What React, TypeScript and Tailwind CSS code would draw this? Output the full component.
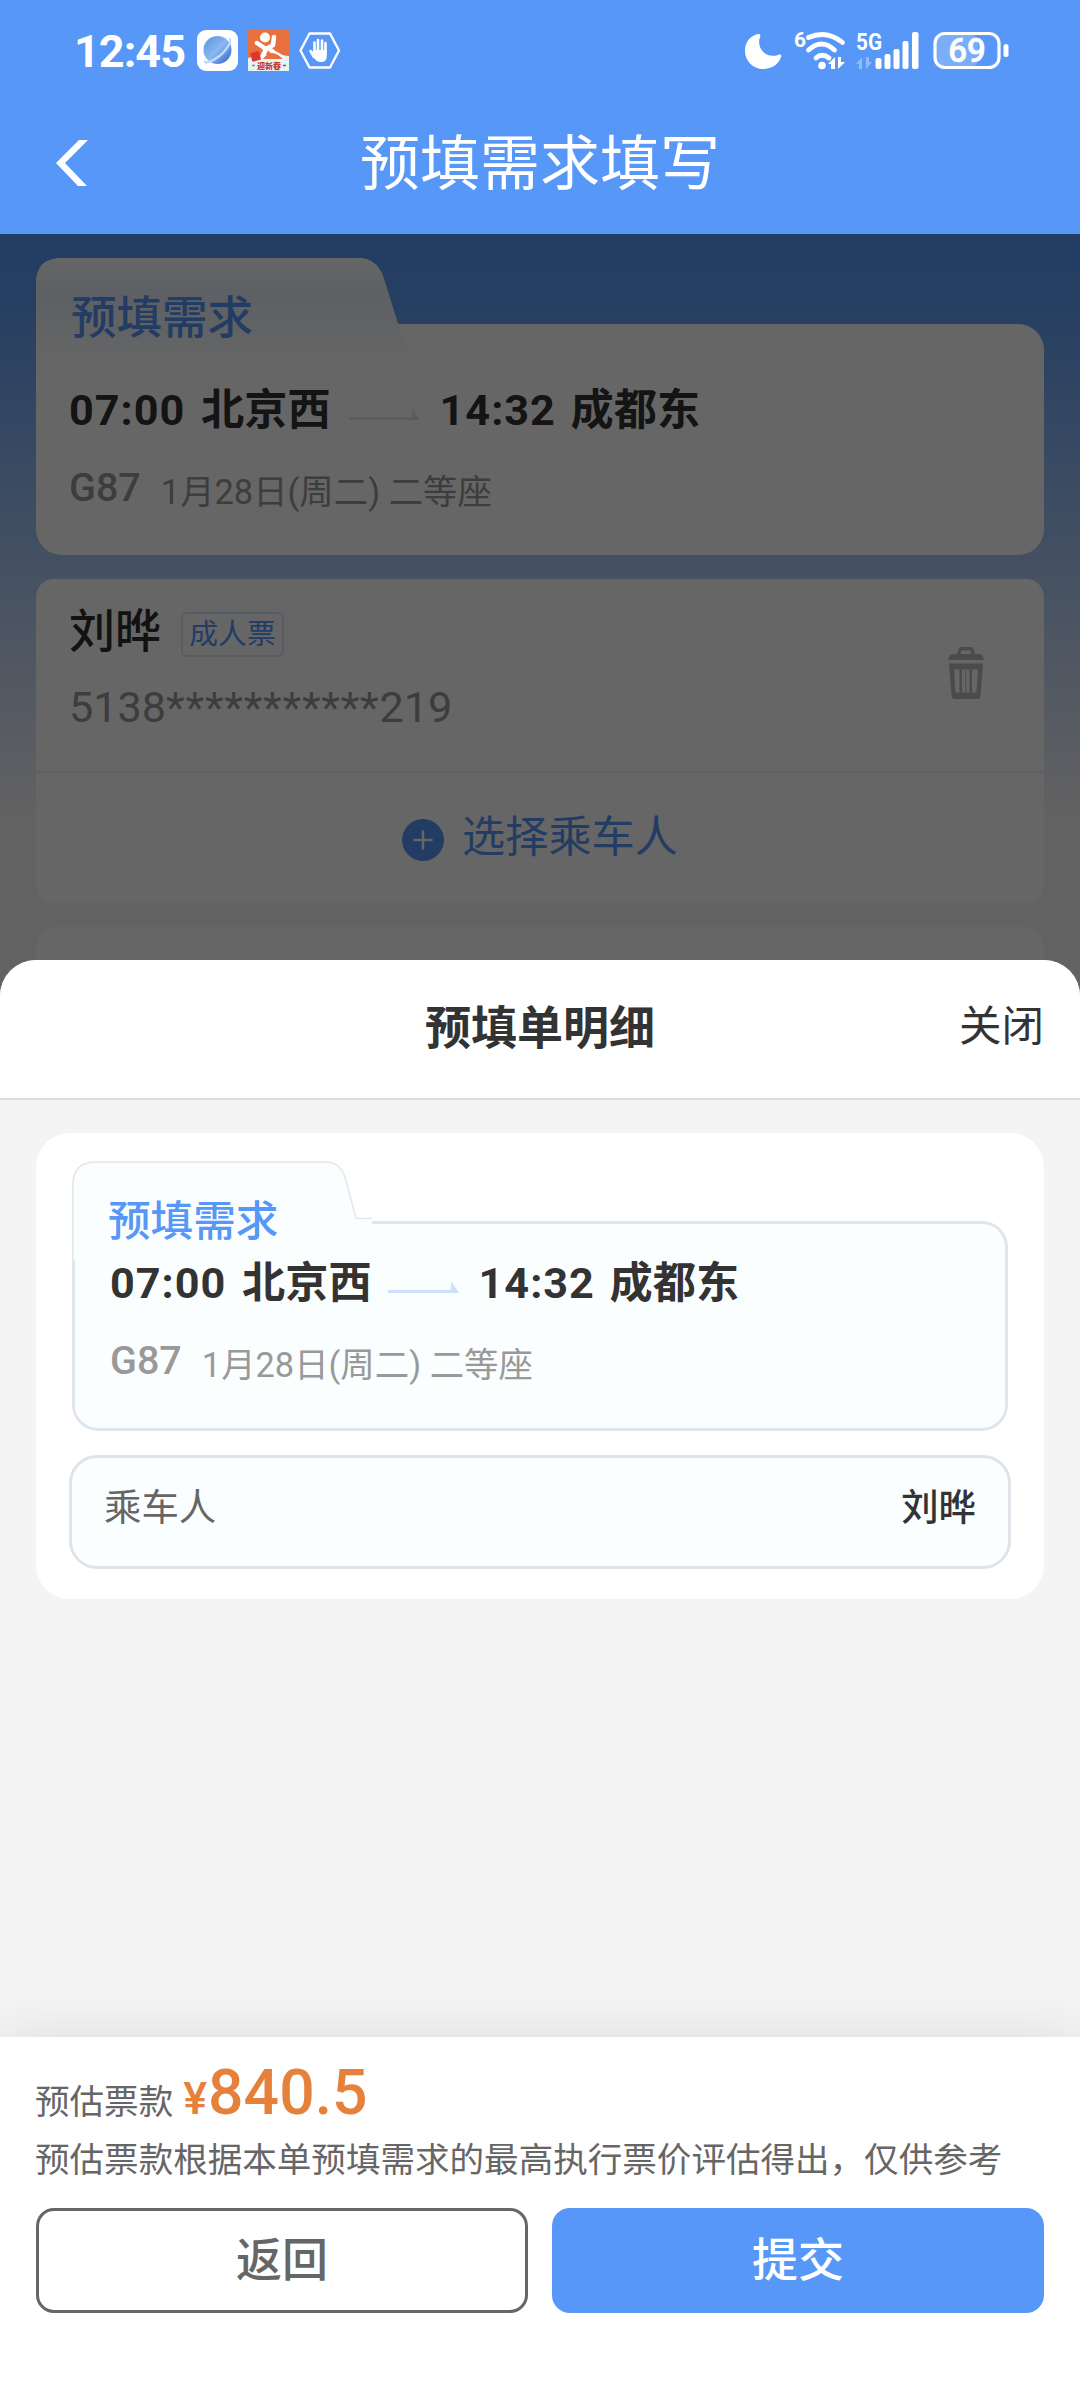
import { useState } from "react";

const FONT =
  "font-['Roboto','Noto_Sans_CJK_SC',sans-serif]";

interface TripInfoProps {
  arrowColor: string;
  arrowMargin: string;
}

function StatusIconsLeft() {
  return (
    <svg width="146" height="44" viewBox="0 0 146 44" fill="none">
      <defs>
        <linearGradient id="planet" x1="0" y1="0" x2="1" y2="1">
          <stop offset="0" stopColor="#5a93dc" />
          <stop offset="0.5" stopColor="#8ab8f2" />
          <stop offset="1" stopColor="#2c5cc4" />
        </linearGradient>
      </defs>
      {/* browser */}
      <rect x="0" y="1" width="41" height="41" rx="9" fill="#fff" />
      <circle cx="20.500" cy="21" r="14" fill="url(#planet)" />
      <path
        d="M31 9c4-1 4 3 2 7-4 8-13 16-21 18-5 2-6-1-4-5-1 3 1 4 5 2 8-3 15-10 18-16 2-3 2-5 0-6z"
        fill="#c3d9fa"
      />
      {/* map app */}
      <rect x="51" y="1" width="41" height="41" fill="#e8703c" />
      <path d="M51 29q20-6 41-2v15H51z" fill="#e4f5f3" />
      <circle cx="68" cy="8.500" r="5" fill="#fff" />
      <path
        d="M60 14l9 6 7-4 1-8M69 20l-4 9M73 20q2 3 8 6l5 3"
        stroke="#fff"
        strokeWidth="4.500"
        strokeLinecap="round"
      />
      <path d="M66 30q8-12 20 0z" fill="#e8703c" />
      <rect x="54" y="23" width="9" height="9" rx="1" fill="#dc3833" transform="rotate(-15 58 27)" />
      <text
        x="72"
        y="39.500"
        fontSize="8"
        fontWeight="900"
        fill="#c93832"
        textAnchor="middle"
        fontFamily="Noto Sans CJK SC, sans-serif"
      >
        迎新春
      </text>
      <path d="M55.500 36.500h2M86 36.500h3" stroke="#c93832" strokeWidth="1.500" />
      {/* hand in a hexagon */}
      <path
        d="M112.500 4.500h20.500l9 17-9 17h-20.500l-9-17z"
        stroke="#fff"
        strokeWidth="2.400"
        strokeLinejoin="round"
      />
      <path
        d="M117.500 24V13.500M121 22V11M125 22V11.500M128.500 24V14M117 28l-3.500-6"
        stroke="#fff"
        strokeWidth="2.600"
        strokeLinecap="round"
      />
      <path d="M116.200 21h13.600v6q0 6-5.500 6h-1.500q-3 0-5-3l-3.500-5z" fill="#fff" />
    </svg>
  );
}

function StatusIconsRight() {
  return (
    <svg width="266" height="54" viewBox="0 -6 266 54" fill="none">
      {/* moon */}
      <path
        d="M14 4C5 6 1 13 1 21c0 10 8 18 18 18 9 0 16-5 18-12 1-2-1-3-3-2-12 4-22-7-18-18 1-2 0-3.500-2-3z"
        fill="#fff"
      />
      {/* wifi */}
      <text x="50" y="17" fontSize="21" fontWeight="700" fill="#fff" fontFamily="Roboto, sans-serif">
        6
      </text>
      <g stroke="#fff" strokeWidth="4.800" strokeLinecap="round">
        <path d="M64.500 7.500q18-8 34 5" />
        <path d="M64.500 20q13-12 26 0" />
        <path d="M72 28q6-5.500 13 0" />
      </g>
      <circle cx="78" cy="35.500" r="3.800" fill="#fff" />
      <path d="M84 34l7-7v12h-4v-5zM101 32l-7 7V27h3v5z" fill="#fff" />
      {/* mobile signal */}
      <text
        x="112"
        y="19.500"
        fontSize="24"
        fontWeight="700"
        fill="#fff"
        textLength="26"
        lengthAdjust="spacingAndGlyphs"
        fontFamily="Roboto, sans-serif"
      >
        5G
      </text>
      <path d="M112 34l6-7v12h-3v-5zM128 32l-6 7V27h3v5z" fill="#91bbfa" />
      <rect x="131.500" y="28" width="6" height="11" rx="2" fill="#fff" />
      <rect x="140.500" y="24" width="6" height="15" rx="2" fill="#fff" />
      <rect x="149.500" y="19" width="6" height="20" rx="2" fill="#fff" />
      <rect x="158.500" y="11" width="6" height="28" rx="2" fill="#fff" />
      <rect x="168" y="2" width="6.500" height="37" rx="2" fill="#fff" />
      {/* battery */}
      <rect x="192" y="5" width="42" height="31" rx="6" fill="#7baef9" />
      <rect x="191" y="3.500" width="64" height="34" rx="10" stroke="#fff" strokeWidth="3.200" />
      <rect x="259.500" y="14" width="5" height="13" rx="2.500" fill="#fff" />
      <text
        x="223"
        y="32"
        fontSize="33"
        fontWeight="500"
        fill="#fff"
        stroke="#fff"
        strokeWidth="0.600"
        textAnchor="middle"
        fontFamily="Roboto, sans-serif"
      >
        69
      </text>
    </svg>
  );
}

function TrashIcon() {
  return (
    <svg className="mb-[4px]" width="36" height="52" viewBox="0 0 36 52">
      <path
        fillRule="evenodd"
        fill="#bcbcbc"
        d="M9 7l1.500-5Q11 0 13 0h10q2 0 2.500 2L27 7h4q4 0 5 6H0q1-6 5-6zm3.500 0h11l-1-3.500h-9zM1 16.500h34l-2.500 32Q32.300 52 29 52H7q-3.300 0-3.500-3.500zM6 22.500l1.500 23h4v-23zm8 0v23h7.500v-23zm10 0v23h4.500l1.500-23z"
      />
      <path d="M17.750 22v24" stroke="#bcbcbc" strokeWidth="1" />
    </svg>
  );
}

function TripInfo({ arrowColor, arrowMargin }: TripInfoProps) {
  return (
    <>
      <div className="flex h-[60px] items-center text-[43.2px] leading-[60px] font-bold text-[#333]">
        <span className="w-[117px] tracking-[1px]">07:00</span>
        <span className="ml-[15px]">北京西</span>
        <svg
          className={arrowMargin}
          width="71"
          height="14"
          viewBox="0 0 71 14"
          fill={arrowColor}
        >
          <path d="M0 9h63V0l8 12H0z" />
        </svg>
        <span className="ml-[20px] w-[117px] tracking-[1px]">14:32</span>
        <span className="ml-[14px]">成都东</span>
      </div>
      <div className="mt-[22px] flex h-[50px] items-center leading-[50px] text-[#999]">
        <span className="text-[39.5px] font-medium">G87</span>
        <span className="mt-2 ml-[20px] text-[34.4px]">1月28日(周二) 二等座</span>
      </div>
    </>
  );
}

export default function App() {
  const [passenger] = useState("刘晔");

  return (
    <div className={`relative flex h-[2400px] w-[1080px] flex-col overflow-hidden bg-[#f4f4f4] ${FONT}`}>
      {/* Status bar + title */}
      <header className="h-[234px] shrink-0 bg-[#5697f8] text-white">
        <div className="flex h-[102px] items-center justify-between pr-[70px] pl-[74px]">
          <div className="flex items-center">
            <span className="w-[123px] text-[45px] leading-none font-bold tracking-[-1px]">12:45</span>
            <StatusIconsLeft />
          </div>
          <StatusIconsRight />
        </div>
        <div className="grid h-[122px] grid-cols-[1fr_auto_1fr] items-center">
          <svg className="ml-[56px]" width="34" height="48" viewBox="0 0 34 48" fill="#fff">
            <path d="M23 1h9L9 24l22 23h-9L0 24z" />
          </svg>
          <h1 className="pt-[4px] text-[60px] leading-[80px] font-normal">预填需求填写</h1>
          <span />
        </div>
      </header>

      {/* Form behind the sheet */}
      <main className="relative flex-1 bg-[linear-gradient(to_bottom,#5697f8_0px,#619ef5_70px,#f4f4f4_580px)] px-[36px] pt-[24px]">
        <section className="relative h-[297px] pl-[33px]">
          <svg className="absolute top-0 left-0" width="1008" height="297" viewBox="0 0 1008 297">
            <defs>
              <linearGradient id="tab" x1="0" y1="0" x2="0" y2="1">
                <stop offset="0" stopColor="#fff" />
                <stop offset="0.3" stopColor="#e9effa" />
                <stop offset="0.7" stopColor="#f1f5fb" />
                <stop offset="1" stopColor="#fff" />
              </linearGradient>
            </defs>
            <path
              d="M0 26Q0 0 26 0H322Q340 0 347 18L362 66H982a26 26 0 0 1 26 26V271a26 26 0 0 1-26 26H26a26 26 0 0 1-26-26z"
              fill="#fff"
            />
            <path d="M0 26Q0 0 26 0H322Q340 0 347 18L362 66 373 100H0z" fill="url(#tab)" />
          </svg>
          <div className="relative pt-[31px]">
            <h2 className="mb-[32px] h-[60px] pl-[2px] text-[45.5px] leading-[60px] font-medium text-[#5697f8]">
              预填需求
            </h2>
            <TripInfo arrowColor="#dbe8fa" arrowMargin="ml-[18px] mt-[8px]" />
          </div>
        </section>

        <section className="mt-[24px] h-[324px] rounded-[18px] bg-white">
          <div className="flex h-[194px] items-center justify-between border-b-2 border-[#f0f0f0] pr-[60px] pl-[33px]">
            <div className="h-full pt-[22px]">
              <div className="flex h-[60px] items-center">
                <span className="text-[46px] leading-[60px] font-medium text-[#2f2f2f]">{passenger}</span>
                <span className="mt-[7px] ml-[20px] flex h-[45px] w-[103px] items-center justify-center rounded-md border-2 border-[#dce8fb] text-[28.8px] leading-none text-[#5697f8]">
                  成人票
                </span>
              </div>
              <p className="mt-[22px] text-[43.2px] leading-[50px] text-[#999]">
                5138<span className="tracking-[0.8px]">***********</span>219
              </p>
            </div>
            <TrashIcon />
          </div>
          <button className="flex h-[130px] w-full items-center justify-center gap-[18px] text-[43.2px] text-[#5697f8]">
            <svg className="mt-1" width="42" height="42" viewBox="0 0 42 42">
              <circle cx="21" cy="21" r="21" fill="#5697f8" />
              <path d="M21 11.500v19M11.500 21h19" stroke="#fff" strokeWidth="2.500" />
            </svg>
            选择乘车人
          </button>
        </section>

        <section className="mt-[24px] h-[324px] rounded-[18px] bg-white" />

        <div className="absolute inset-0 bg-black/60" />
      </main>

      {/* Detail sheet */}
      <div className="absolute inset-x-0 bottom-0 flex h-[1440px] flex-col overflow-hidden rounded-t-[36px] bg-[#f4f4f4]">
        <div className="grid h-[140px] shrink-0 grid-cols-[1fr_auto_1fr] items-center border-b-2 border-[#dcdcdc] bg-white px-[36px] text-[#333]">
          <span />
          <h2 className="mb-[3px] text-[46px] leading-[60px] font-bold">预填单明细</h2>
          <button className="mb-1 justify-self-end text-[42.5px] leading-[60px]">关闭</button>
        </div>

        <div className="flex-1 px-[36px] pt-[33px]">
          <div className="h-[466px] rounded-[34px] bg-white px-[36px] pt-[28px]">
            <section className="relative h-[270px] pl-[37px]">
              <svg className="absolute top-0 left-0" width="936" height="270" viewBox="0 0 936 270" fill="none">
                <path
                  d="M1 24Q1 1 24 1H254Q268 1 273 16L284 58H300V61.500H910a24.500 24.500 0 0 1 24.500 24.500V244a24.500 24.500 0 0 1-24.500 24.500H26A24.500 24.500 0 0 1 1.500 244z"
                  fill="#fbfeff"
                />
                <path d="M0.800 99V24Q1 1 24 1H254Q268 1 273 16L284 57.500H300" stroke="#e4e7ea" strokeWidth="1.600" />
                <path
                  d="M300 61.500H910a24.500 24.500 0 0 1 24.500 24.500V244a24.500 24.500 0 0 1-24.500 24.500H26A24.500 24.500 0 0 1 1.500 244V99"
                  stroke="#dfe5ec"
                  strokeWidth="2.800"
                />
              </svg>
              <div className="relative pt-[30px] pl-px">
                <h3 className="mb-[3px] -ml-[2px] h-[60px] text-[42.6px] leading-[60px] font-medium text-[#5697f8]">
                  预填需求
                </h3>
                <TripInfo arrowColor="#cde0fb" arrowMargin="ml-[16px] mt-[8px]" />
              </div>
            </section>

            <div className="-mx-[3px] mt-[24px] flex h-[114px] items-center justify-between rounded-[28px] border-3 border-[#e0e4e9] bg-[#fbfeff] px-[32px] pb-2 text-[37.44px]">
              <span className="text-[#666]">乘车人</span>
              <span className="font-medium text-[#333]">{passenger}</span>
            </div>
          </div>
        </div>

        <footer className="h-[363px] shrink-0 bg-white px-[35px] pt-[20px] shadow-[0_0_50px_rgba(0,0,0,0.1)]">
          <div className="flex h-[72px] items-baseline text-[34.56px] leading-[72px] text-[#666]">
            预估票款
            <span className="ml-[10px] text-[45px] font-medium text-[#e5813a]">¥</span>
            <span className="ml-px text-[62.5px] font-medium text-[#e5813a]">840.5</span>
          </div>
          <p className="mt-[6px] text-[34.56px] leading-[50px] whitespace-nowrap text-[#666]">
            预估票款根据本单预填需求的最高执行票价评估得出，仅供参考
          </p>
          <div className="mx-px mt-[23px] grid grid-cols-2 gap-6 text-[46px] leading-[99px] font-medium">
            <button className="h-[105px] rounded-[18px] border-3 border-[#666] text-[#666]">返回</button>
            <button className="h-[105px] rounded-[18px] bg-[#5697f8] text-white">提交</button>
          </div>
        </footer>
      </div>
    </div>
  );
}
